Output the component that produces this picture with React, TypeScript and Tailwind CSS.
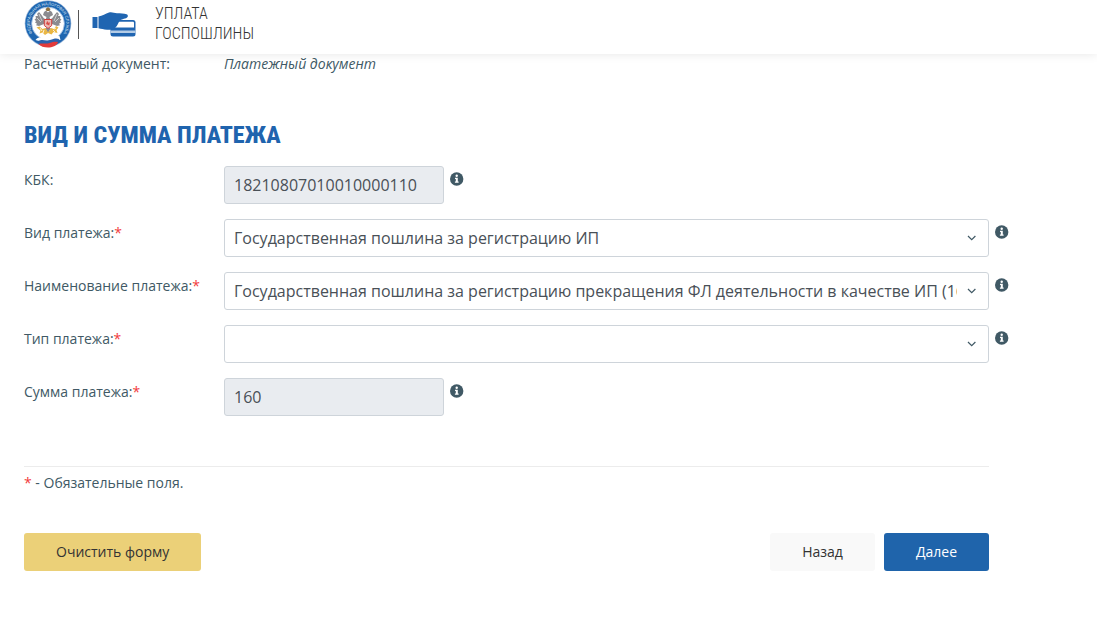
import type { ReactNode } from "react";

const DIN = "font-['Roboto_Condensed','Liberation_Sans_Narrow','DejaVu_Sans_Condensed',sans-serif]";

function Emblem() {
  return (
    <svg viewBox="0 0 48 48" className="h-12 w-12 shrink-0" aria-label="ФНС России" role="img">
      <defs>
        <path id="ring" d="M9.800 34.900A18.200 18.200 0 1 1 38.200 34.900" />
      </defs>
      <circle cx="24" cy="23.5" r="23.3" fill="#9db9da" />
      <circle cx="24" cy="23.5" r="22.6" fill="#1f66b0" />
      <circle cx="24" cy="23.5" r="16.4" fill="#fff" stroke="#8fb2da" strokeWidth="0.8" />
      <text fill="#d5e3f4" fontSize="4.200" fontFamily="Liberation Sans, sans-serif" textAnchor="middle">
        <textPath href="#ring" startOffset="50%">
          ФЕДЕРАЛЬНАЯ НАЛОГОВАЯ СЛУЖБА
        </textPath>
      </text>
      <g fill="#8b8b90">
        <path d="M22.500 17 19 15l1-3 2-1.500 2 2 2-2 2 1.500 1 3-3.500 2 1 3h-5z" />
        <path d="M21 19c-2-1-3-4-6-7l-2 2 1 2-2.500 0 .5 2.500-1.500.8 1.500 2-1 1.200 2 1.300-1 1.500 3 .6 5-2z" />
        <path d="M27 19c2-1 3-4 6-7l2 2-1 2 2.500 0-.5 2.500 1.500.8-1.500 2 1 1.200-2 1.300 1 1.500-3 .6-5-2z" />
        <path d="M21 28l3 5 3-5z" />
      </g>
      <path d="M15 14l3 7M13 18l4 4M33 14l-3 7M35 18l-4 4" stroke="#e8e8e8" strokeWidth="0.7" />
      <path d="M21.500 9l2.500-2 2.500 2-1 2h-3z" fill="#8e7040" />
      <path d="M20.300 19.500h7.400v6L24 28.500l-3.700-3z" fill="#e9b9b4" stroke="#cf3e3b" />
      <path d="M22 24l1.200-3 1.600 2 1.200-1-.8 3.500z" fill="#d94b46" />
      <path
        d="M12.500 27.500l3-1 3 2.500 3-1 2.500 4.500 3-4.500 3 1 2-3 2.500 1.500-2 2.500 1 3-4-1-2 2.500-3.500-1.500-3 2-2.500-2.500-3 1 1-3z"
        fill="#eab743"
      />
      <path d="M16 28l2 3M20 30l-1 3M29 30l2 2M32 28l-2 1" stroke="#fff" strokeWidth="0.8" />
      <path d="M11.500 40c4-5 9-1 14-3 4-2 7-2 10-1l1 4c-6-1-8 3-12 3s-8-2-13-3z" fill="#fff" />
      <path d="M13.500 41.500c5-3 8 0 12.500-1.500 4-1.500 6-2 9-1l-.5 3.500c-5 0-6 2-10.500 2s-6.500-1-10.500-3z" fill="#2b62ad" />
      <path d="M14.500 44c4-1.500 7 .5 11-1 4-1.500 6-1.500 8.500-1-1 4-6 5.500-10 5.500s-7.500-1-9.500-3.500z" fill="#e23a3a" />
    </svg>
  );
}

function PayIcon() {
  return (
    <svg viewBox="0 0 44 26" className="h-[26px] w-11 shrink-0" aria-hidden="true">
      <path d="M.5 6h5v11h-5z" fill="#2065b1" />
      <path d="M25 9h16q2.500 0 2.500 2.500V23q0 2.500-2.500 2.500H21q-2.500 0-2.500-2.500v-6z" fill="#2065b1" />
      <path d="M26.500 10.800H41q1 0 1 1v4.700H20.500z" fill="#fff" />
      <path d="M18.500 19.500h25v2.500h-25z" fill="#b4cce6" />
      <path
        d="M6.500 5.500c4-.5 7-3 10.500-4 3-.8 5 .6 8 .8 3.500.2 7 0 9.500 1 2 .8 1.800 3.200-.5 3.900-3 .8-5.500 1.300-6.500 2.800-1.200 2-2 4.500-4 6.500-2 2.200-5 2.500-8.500 2.300-3.500-.2-5.500-1-8.500-1.500z"
        fill="#2065b1"
      />
    </svg>
  );
}

function Info() {
  return (
    <button type="button" aria-label="Подсказка" className="mt-1.5 size-3.5 shrink-0">
      <svg viewBox="0 0 14 14" className="size-3.5">
        <circle cx="6.700" cy="7" r="6.700" fill="#405965" />
        <circle cx="6.700" cy="3.700" r="1.200" fill="#fff" />
        <path d="M5 5.800h2.800v3.600h.8v1.300H4.900V9.400h.9V7.100H5z" fill="#fff" />
      </svg>
    </button>
  );
}

function Row({ id, label, required, children }: { id: string; label: string; required?: boolean; children: ReactNode }) {
  return (
    <div className="flex items-start">
      <label htmlFor={id} className="w-50 shrink-0 pt-1 text-sm">
        {label}
        {required && <span className="text-[#f23b3b]">*</span>}
      </label>
      <div className="flex min-w-0 flex-1 items-start gap-1.5">
        {children}
        <Info />
      </div>
    </div>
  );
}

const control = "h-[38px] rounded-[3px] border border-[#ced4da] pl-[9px] text-base text-[#495057]";

function ReadonlyField({ id, value }: { id: string; value: string }) {
  return <input id={id} readOnly value={value} className={`${control} w-55 bg-[#e9ecf0]`} />;
}

function SelectField({ id, options }: { id: string; options: string[] }) {
  return (
    <div className="relative min-w-0 flex-1">
      <select id={id} className={`${control} block w-full appearance-none bg-white pr-[31px]`}>
        {options.map((option) => (
          <option key={option}>{option}</option>
        ))}
      </select>
      <svg
        viewBox="0 0 10 6"
        className="pointer-events-none absolute top-4 right-3 h-1.5 w-2.5"
        fill="none"
        stroke="#405965"
        strokeWidth="1.2"
        aria-hidden="true"
      >
        <path d="M1 1 4.700 4.700 8.400 1" />
      </svg>
    </div>
  );
}

export default function App() {
  return (
    <div className="bg-white font-['Open_Sans','Noto_Sans',sans-serif] text-sm text-[#405965]">
      <header className="sticky top-0 z-10 flex h-[54px] items-start bg-white pl-6 shadow-[0_0_10px_rgba(0,0,0,0.1)]">
        <Emblem />
        <span className="mt-2.5 ml-1.5 h-[29px] w-px bg-[#555]" />
        <span className="mt-[11px] ml-[13px]">
          <PayIcon />
        </span>
        <a href="#" className={`${DIN} mt-1 ml-[19px] text-base leading-5 font-light text-[#333] uppercase`}>
          Уплата
          <br />
          госпошлины
        </a>
      </header>

      <main className="pr-22 pb-12 pl-6">
        <dl className="flex">
          <dt className="w-50">Расчетный документ:</dt>
          <dd className="italic">Платежный документ</dd>
        </dl>

        <h1 className={`${DIN} mt-[45px] text-2xl leading-8 font-extrabold text-[#1f64ae] uppercase`}>
          Вид и сумма платежа
        </h1>

        <form className="mt-[15px]">
          <div className="flex flex-col gap-[15px]">
            <Row id="kbk" label="КБК:">
              <ReadonlyField id="kbk" value="18210807010010000110" />
            </Row>
            <Row id="kind" label="Вид платежа:" required>
              <SelectField id="kind" options={["Государственная пошлина за регистрацию ИП"]} />
            </Row>
            <Row id="name" label="Наименование платежа:" required>
              <SelectField
                id="name"
                options={["Государственная пошлина за регистрацию прекращения ФЛ деятельности в качестве ИП (160)"]}
              />
            </Row>
            <Row id="type" label="Тип платежа:" required>
              <SelectField id="type" options={[""]} />
            </Row>
            <Row id="sum" label="Сумма платежа:" required>
              <ReadonlyField id="sum" value="160" />
            </Row>
          </div>

          <div className="mt-[50px] mr-5 border-t border-[#ececec] pt-1.5">
            <p>
              <span className="text-[#f23b3b]">*</span> - Обязательные поля.
            </p>
            <div className="mt-10 flex gap-[9px]">
              <button type="reset" className="mr-auto h-[38px] rounded-[3px] bg-[#ebd078] px-8 text-[#333]">
                Очистить форму
              </button>
              <button type="button" className="h-[38px] rounded-[3px] bg-[#f9f9f9] px-8 text-[#333]">
                Назад
              </button>
              <button type="submit" className="h-[38px] rounded-[3px] bg-[#1f64ab] px-8 text-white">
                Далее
              </button>
            </div>
          </div>
        </form>
      </main>
    </div>
  );
}
